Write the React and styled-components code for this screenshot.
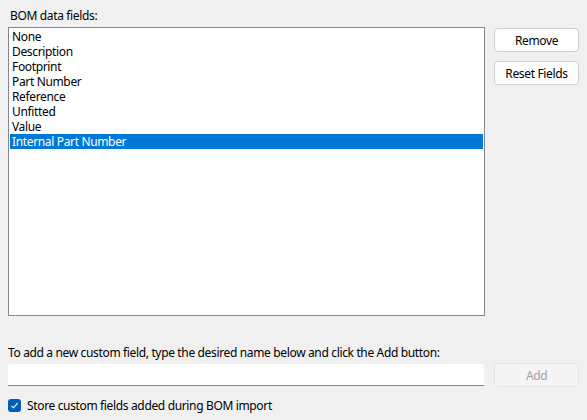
import React from "react";
import styled, { createGlobalStyle } from "styled-components";

const Global = createGlobalStyle`
  html, body { margin: 0; padding: 0; background: #f0f0f0; }
  body { font-family: "Noto Sans", "Segoe UI", sans-serif; font-size: 12px; letter-spacing: -0.35px; color: #000; }
`;

const Page = styled.div`
  width: 587px;
  height: 420px;
  box-sizing: border-box;
  padding: 8px 8px 0 8px;
  display: flex;
  flex-direction: column;
`;

const Label = styled.div`
  line-height: 16px;
  padding-left: ${(p) => p.$indent || 0}px;
  height: 16px;
`;

const TopRow = styled.div`
  display: flex;
  gap: 9px;
  margin-top: 3px;
`;

const ListBox = styled.div`
  width: 477px;
  height: 289px;
  box-sizing: border-box;
  border: 1px solid #828790;
  background: #fff;
  padding: 1px 1px;
`;

const Item = styled.div`
  height: 15px;
  line-height: 15px;
  padding-left: 2px;
  white-space: nowrap;
  background: ${(p) => (p.$selected ? "#0078d7" : "transparent")};
  color: ${(p) => (p.$selected ? "#fff" : "#000")};
`;

const Side = styled.div`
  display: flex;
  flex-direction: column;
  gap: 9px;
  padding-top: 1px;
`;

const Button = styled.button`
  width: 85px;
  height: 24px;
  box-sizing: border-box;
  border: 1px solid ${(p) => (p.disabled ? "#e5e5e5" : "#d0d0d0")};
  border-radius: 4px;
  background: ${(p) => (p.disabled ? "#f5f5f5" : "#fdfdfd")};
  color: ${(p) => (p.disabled ? "#a0a0a0" : "#000")};
  font-family: inherit;
  font-size: 12px;
  letter-spacing: inherit;
  padding: 0;
  cursor: default;
`;

const BottomLabel = styled(Label)`
  margin-top: 29px;
`;

const InputRow = styled.div`
  display: flex;
  align-items: center;
  gap: 10px;
  margin-top: 2px;
`;

const TextInput = styled.input`
  width: 477px;
  height: 22px;
  box-sizing: border-box;
  border: none;
  border-bottom: 1px solid #868686;
  border-radius: 3px 3px 0 0;
  background: #fff;
  outline: none;
  font-family: inherit;
  font-size: 12px;
  padding: 0 4px;
`;

const CheckRow = styled.label`
  display: flex;
  align-items: center;
  gap: 6px;
  margin-top: 10px;
  height: 16px;
`;

const Box = styled.span`
  width: 13px;
  height: 13px;
  border-radius: 3px;
  background: #005fb8;
  display: flex;
  align-items: center;
  justify-content: center;
`;

const fields = [
  "None",
  "Description",
  "Footprint",
  "Part Number",
  "Reference",
  "Unfitted",
  "Value",
  "Internal Part Number",
];

export default function App() {
  return (
    <>
      <Global />
      <Page>
        <Label $indent={2}>BOM data fields:</Label>
        <TopRow>
          <ListBox>
            {fields.map((f, i) => (
              <Item key={f} $selected={i === fields.length - 1}>
                {f}
              </Item>
            ))}
          </ListBox>
          <Side>
            <Button>Remove</Button>
            <Button>Reset Fields</Button>
          </Side>
        </TopRow>
        <BottomLabel>
          To add a new custom field, type the desired name below and click the Add button:
        </BottomLabel>
        <InputRow>
          <TextInput />
          <Button disabled>Add</Button>
        </InputRow>
        <CheckRow>
          <Box>
            <svg width="9" height="9" viewBox="0 0 9 9">
              <path d="M1.5 4.8 L3.5 6.8 L7.6 2.2" fill="none" stroke="#fff" strokeWidth="1.1" />
            </svg>
          </Box>
          <span>Store custom fields added during BOM import</span>
        </CheckRow>
      </Page>
    </>
  );
}
